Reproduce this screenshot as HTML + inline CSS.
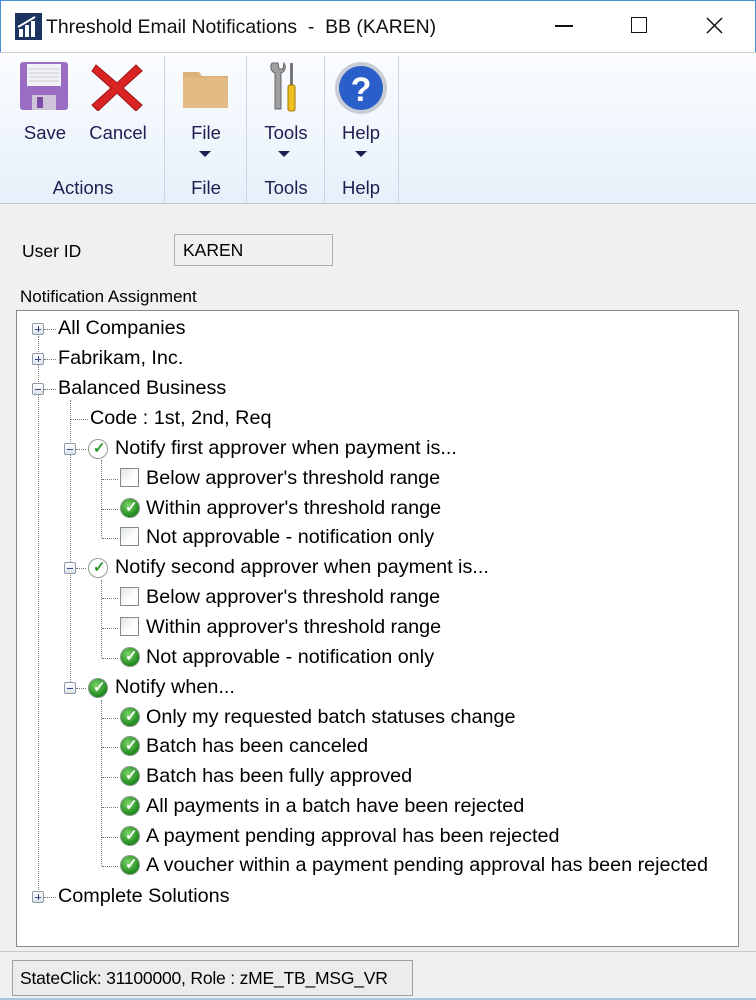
<!DOCTYPE html>
<html><head><meta charset="utf-8"><style>
*{margin:0;padding:0;box-sizing:border-box}
body{width:756px;height:1000px;background:#f0f0f0;font-family:"Liberation Sans",sans-serif;position:relative;overflow:hidden;color:#000}
.a{position:absolute}
.title{left:0;top:0;width:756px;height:52px;background:#fff;border:1px solid #4a90d9;border-bottom:none}
.rib{left:0;top:52px;width:756px;height:152px;background:linear-gradient(#fbfdff,#e6f0fa);border-top:1px solid #c6cfd8;border-bottom:1px solid #bcc6d0}
.sep{top:56px;width:1px;height:146px;background:#c9d6e3}
.lbl{font-size:18.5px;color:#1e1e50;text-align:center}
.arr{width:0;height:0;border-left:6px solid transparent;border-right:6px solid transparent;border-top:6px solid #1e1e50}
.t{font-size:19.8px;white-space:nowrap;line-height:22px}
.exp{width:12px;height:12px;border:1px solid #8e9aa8;background:linear-gradient(#fff,#dde3ea);border-radius:2px}
.exp:before{content:"";position:absolute;left:2px;top:4.5px;width:6px;height:1.5px;background:#3b4a8a}
.plus:after{content:"";position:absolute;left:4.5px;top:2px;width:1.5px;height:6px;background:#3b4a8a}
.hd{border-top:1px dotted #777;height:0}
.vd{border-left:1px dotted #777;width:0}
.cb{width:19px;height:19px;border:1px solid #8a8a8a;background:linear-gradient(135deg,#dfe5df,#fff 60%)}
.gc{width:20px;height:20px;border-radius:50%;background:radial-gradient(circle at 40% 35%,#7fd36a,#1c8a1c 70%);border:1px solid #8a9a8a}
.hc{width:20px;height:20px;border-radius:50%;background:#fff;border:1.5px solid #8f9f8f}
.gc:after,.hc:after{content:"✓";position:absolute;left:4px;top:-1px;font-size:15px;font-weight:bold;color:#fff}
.hc:after{color:#2a9a2a}
</style></head><body>
<div class="a title"></div>
<svg class="a" style="left:15px;top:13px" width="27" height="27" viewBox="0 0 27 27"><rect width="27" height="27" fill="#1d3461"/><rect x="4" y="16" width="4" height="8" fill="#fff"/><rect x="10" y="12" width="4" height="12" fill="#fff"/><rect x="16" y="8" width="4" height="16" fill="#fff"/><path d="M3 14 L20 4" stroke="#fff" stroke-width="2"/></svg>
<div class="a" style="left:46px;top:16px;font-size:19.4px;color:#111">Threshold Email Notifications&nbsp; - &nbsp;BB (KAREN)</div>
<div class="a" style="left:555px;top:25px;width:18px;height:1.5px;background:#111"></div>
<div class="a" style="left:631px;top:17px;width:16px;height:16px;border:1.5px solid #111"></div>
<svg class="a" style="left:706px;top:17px" width="17" height="17"><path d="M1 1L16 16M16 1L1 16" stroke="#111" stroke-width="1.5"/></svg>

<div class="a rib"></div>
<div class="a sep" style="left:164px"></div><div class="a sep" style="left:246px"></div><div class="a sep" style="left:324px"></div><div class="a sep" style="left:398px"></div>
<svg class="a" style="left:19px;top:61px" width="50" height="50" viewBox="0 0 50 50"><rect x="1" y="1" width="48" height="48" rx="3" fill="#9a6cc2"/><rect x="8" y="3" width="34" height="22" fill="#f2f2f6"/><path d="M10 8h30M10 12h30M10 16h30M10 20h30" stroke="#ccc"/><rect x="13" y="34" width="24" height="15" fill="#cfc4dc"/><rect x="18" y="36" width="6" height="11" fill="#7b4fa6"/></svg>
<svg class="a" style="left:90px;top:61px" width="54" height="50" viewBox="0 0 54 50"><path d="M6 4L27 22L46 4L52 10L33 27L52 44L46 50L27 32L8 50L2 44L21 27L2 10Z" fill="#d92424" stroke="#a01010"/></svg>
<svg class="a" style="left:183px;top:68px" width="45" height="40" viewBox="0 0 45 40"><path d="M0 4h16l3 4h26v32H0z" fill="#dcb27a"/><rect x="0" y="10" width="45" height="30" fill="#e3bb85"/></svg>
<svg class="a" style="left:268px;top:61px" width="32" height="52" viewBox="0 0 32 52"><path d="M4 2c-3 5 0 9 3 10v36h6V12c3-1 6-5 3-10l-1 6h-4L10 2z" fill="#a0a0a0" stroke="#666"/><rect x="22" y="2" width="3" height="24" fill="#777"/><rect x="20" y="24" width="7" height="26" rx="2" fill="#f0c020" stroke="#a07800"/></svg>
<svg class="a" style="left:334px;top:61px" width="54" height="54" viewBox="0 0 54 54"><circle cx="27" cy="27" r="26" fill="#c8ccd4"/><circle cx="27" cy="27" r="22" fill="#2a5ec8"/><text x="27" y="40" text-anchor="middle" font-family="Liberation Sans" font-weight="bold" font-size="34" fill="#fff">?</text></svg>
<div class="a lbl" style="left:15px;top:122px;width:60px">Save</div>
<div class="a lbl" style="left:85px;top:122px;width:66px">Cancel</div>
<div class="a lbl" style="left:176px;top:122px;width:60px">File</div>
<div class="a lbl" style="left:256px;top:122px;width:60px">Tools</div>
<div class="a lbl" style="left:331px;top:122px;width:60px">Help</div>
<div class="a arr" style="left:199px;top:151px"></div><div class="a arr" style="left:278px;top:151px"></div><div class="a arr" style="left:355px;top:151px"></div>
<div class="a lbl" style="left:40px;top:177px;width:86px">Actions</div>
<div class="a lbl" style="left:176px;top:177px;width:60px">File</div>
<div class="a lbl" style="left:256px;top:177px;width:60px">Tools</div>
<div class="a lbl" style="left:331px;top:177px;width:60px">Help</div>

<div class="a" style="left:22px;top:241px;font-size:17.5px">User ID</div>
<div class="a" style="left:174px;top:234px;width:159px;height:32px;border:1px solid #adadad;background:#f0f0f0;font-size:17.5px;padding:5px 8px">KAREN</div>
<div class="a" style="left:20px;top:287px;font-size:17px">Notification Assignment</div>
<div class="a" style="left:16px;top:310px;width:723px;height:637px;background:#fff;border:1px solid #828790"></div>

<div class="a vd" style="left:38px;top:336px;height:560px"></div>
<div class="a vd" style="left:70px;top:400px;height:288px"></div>
<div class="a vd" style="left:101px;top:460px;height:78px"></div>
<div class="a vd" style="left:101px;top:580px;height:78px"></div>
<div class="a vd" style="left:101px;top:700px;height:166px"></div>
<div class="a hd" style="left:44px;top:329px;width:12px"></div>
<div class="a hd" style="left:44px;top:359px;width:12px"></div>
<div class="a hd" style="left:44px;top:389px;width:12px"></div>
<div class="a hd" style="left:44px;top:897px;width:12px"></div>
<div class="a hd" style="left:70px;top:419px;width:18px"></div>
<div class="a hd" style="left:76px;top:449px;width:10px"></div>
<div class="a hd" style="left:76px;top:568px;width:10px"></div>
<div class="a hd" style="left:76px;top:688px;width:10px"></div>

<div class="a exp plus" style="left:32px;top:323px"></div>
<div class="a exp plus" style="left:32px;top:353px"></div>
<div class="a exp" style="left:32px;top:383px"></div>
<div class="a exp plus" style="left:32px;top:891px"></div>
<div class="a exp" style="left:64px;top:443px"></div>
<div class="a exp" style="left:64px;top:562px"></div>
<div class="a exp" style="left:64px;top:682px"></div>

<div class="a t" style="left:58px;top:317px">All Companies</div>
<div class="a t" style="left:58px;top:347px">Fabrikam, Inc.</div>
<div class="a t" style="left:58px;top:377px">Balanced Business</div>
<div class="a t" style="left:90px;top:407px">Code : 1st, 2nd, Req</div>
<div class="a hc" style="left:88px;top:439px"></div><div class="a t" style="left:115px;top:437px">Notify first approver when payment is...</div>
<div class="a hc" style="left:88px;top:558px"></div><div class="a t" style="left:115px;top:556px">Notify second approver when payment is...</div>
<div class="a gc" style="left:88px;top:678px"></div><div class="a t" style="left:115px;top:676px">Notify when...</div>
<div class="a t" style="left:58px;top:885px">Complete Solutions</div>

<div class="a hd" style="left:102px;top:479px;width:16px"></div><div class="a cb" style="left:120px;top:468px"></div><div class="a t" style="left:146px;top:467px">Below approver's threshold range</div>
<div class="a hd" style="left:102px;top:509px;width:16px"></div><div class="a gc" style="left:120px;top:498px"></div><div class="a t" style="left:146px;top:497px">Within approver's threshold range</div>
<div class="a hd" style="left:102px;top:538px;width:16px"></div><div class="a cb" style="left:120px;top:527px"></div><div class="a t" style="left:146px;top:526px">Not approvable - notification only</div>
<div class="a hd" style="left:102px;top:598px;width:16px"></div><div class="a cb" style="left:120px;top:587px"></div><div class="a t" style="left:146px;top:586px">Below approver's threshold range</div>
<div class="a hd" style="left:102px;top:628px;width:16px"></div><div class="a cb" style="left:120px;top:617px"></div><div class="a t" style="left:146px;top:616px">Within approver's threshold range</div>
<div class="a hd" style="left:102px;top:658px;width:16px"></div><div class="a gc" style="left:120px;top:647px"></div><div class="a t" style="left:146px;top:646px">Not approvable - notification only</div>
<div class="a hd" style="left:102px;top:718px;width:16px"></div><div class="a gc" style="left:120px;top:707px"></div><div class="a t" style="left:146px;top:706px">Only my requested batch statuses change</div>
<div class="a hd" style="left:102px;top:747px;width:16px"></div><div class="a gc" style="left:120px;top:736px"></div><div class="a t" style="left:146px;top:735px">Batch has been canceled</div>
<div class="a hd" style="left:102px;top:777px;width:16px"></div><div class="a gc" style="left:120px;top:766px"></div><div class="a t" style="left:146px;top:765px">Batch has been fully approved</div>
<div class="a hd" style="left:102px;top:807px;width:16px"></div><div class="a gc" style="left:120px;top:796px"></div><div class="a t" style="left:146px;top:795px">All payments in a batch have been rejected</div>
<div class="a hd" style="left:102px;top:837px;width:16px"></div><div class="a gc" style="left:120px;top:826px"></div><div class="a t" style="left:146px;top:825px">A payment pending approval has been rejected</div>
<div class="a hd" style="left:102px;top:866px;width:16px"></div><div class="a gc" style="left:120px;top:855px"></div><div class="a t" style="left:146px;top:854px">A voucher within a payment pending approval has been rejected</div>

<div class="a" style="left:0;top:951px;width:756px;height:1px;background:#c8c8c8"></div>
<div class="a" style="left:12px;top:960px;width:401px;height:36px;border:1px solid #a0a0a0;background:#ececec;font-size:17.5px;padding:7px 7px;white-space:nowrap;letter-spacing:-0.2px">StateClick: 31100000, Role : zME_TB_MSG_VR</div>
<div class="a" style="left:0;top:998px;width:756px;height:2px;background:#a9c4e2"></div>
</body></html>
